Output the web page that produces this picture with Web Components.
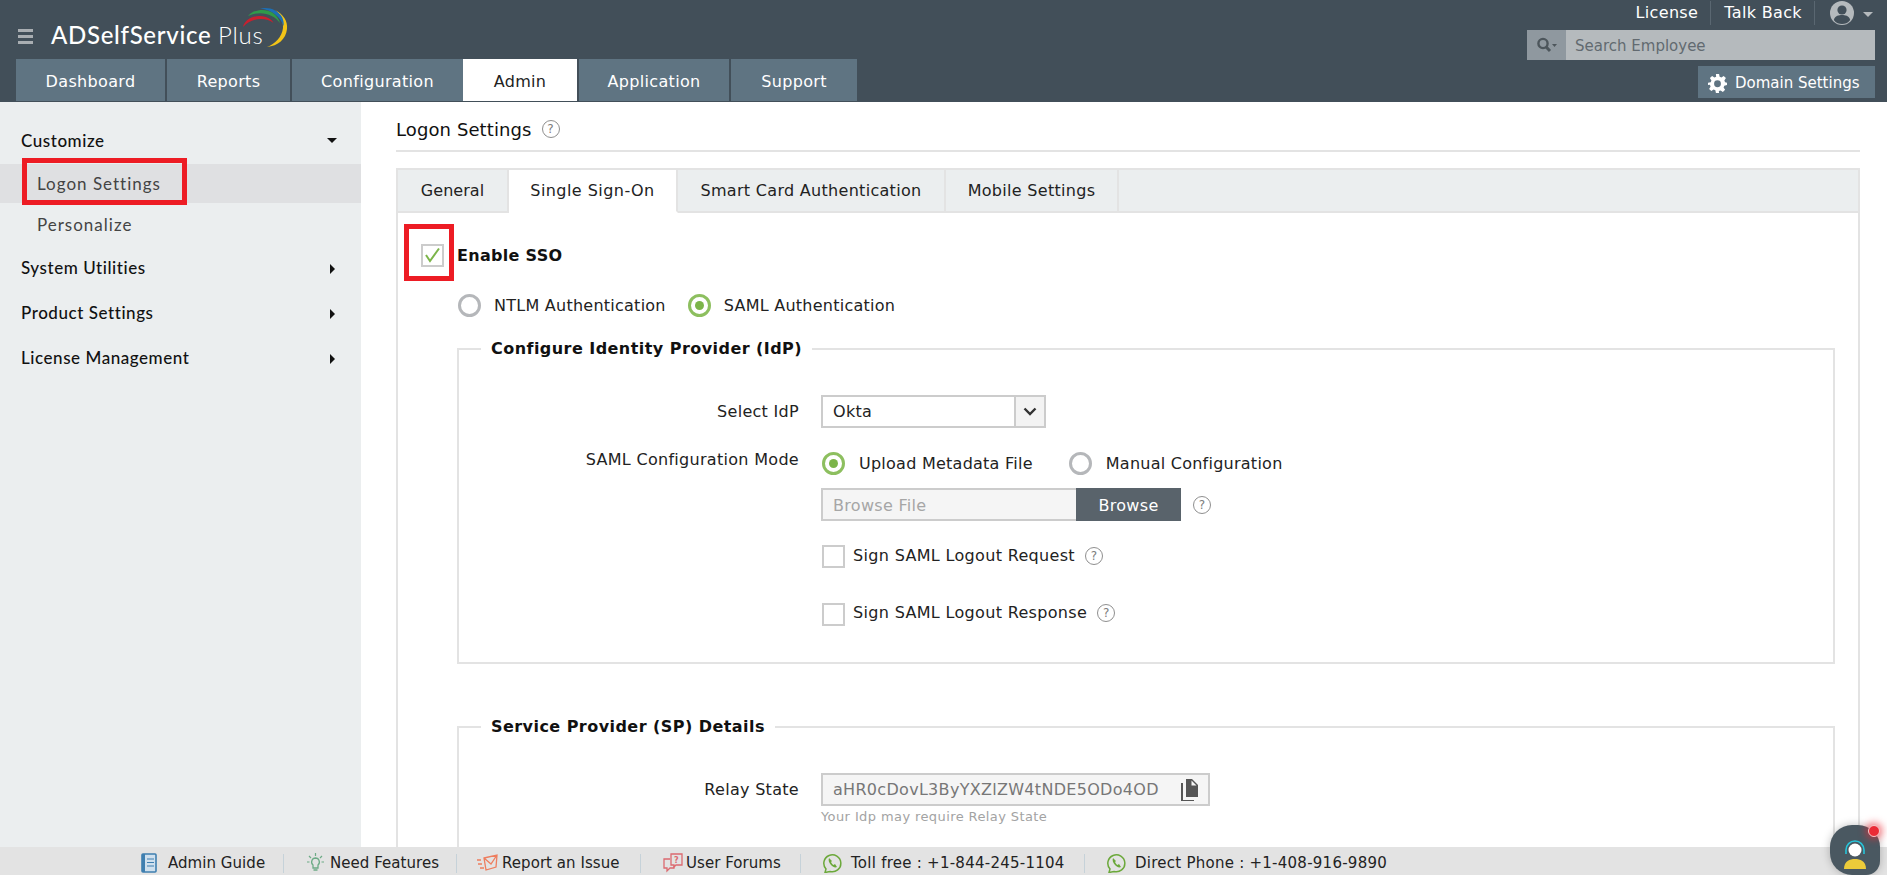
<!DOCTYPE html>
<html>
<head>
<meta charset="utf-8">
<title>ADSelfService Plus</title>
<style>
  html, body { margin: 0; height: 100%; overflow: hidden; }
  body { font-family: "DejaVu Sans", sans-serif; font-size: 16px; color: #222; }
  app-shell { height: 875px; }
</style>
</head>
<body>
<app-shell>
  <app-header slot="header"></app-header>
  <side-menu slot="side">
    <menu-group label="Customize" open>
      <menu-link active marked>Logon Settings</menu-link>
      <menu-link>Personalize</menu-link>
    </menu-group>
    <menu-group label="System Utilities"></menu-group>
    <menu-group label="Product Settings"></menu-group>
    <menu-group label="License Management"></menu-group>
  </side-menu>
  <logon-page slot="main"></logon-page>
  <app-footer slot="footer"></app-footer>
  <chat-bubble slot="footer"></chat-bubble>
</app-shell>

<script>
// small helper so each element is just a class with a template string
function comp(name, html, extra) {
  const t = document.createElement('template');
  t.innerHTML = html;
  customElements.define(name, class extends HTMLElement {
    constructor() {
      super();
      this.attachShadow({mode: 'open'}).appendChild(t.content.cloneNode(true));
      if (extra) extra(this, this.shadowRoot);
    }
  });
}

comp('app-shell', `
<style>
  :host { display: flex; flex-direction: column; }
  .mid { flex: 1; display: flex; min-height: 0; }
</style>
<slot name="header"></slot>
<div class="mid"><slot name="side"></slot><slot name="main"></slot></div>
<slot name="footer"></slot>`);

comp('top-tab', `
<style>
  :host { display: flex; align-items: center; justify-content: center; height: 42px; padding-top: 2px; box-sizing: border-box; background: #5f7482; color: #fff; font-size: 16px; letter-spacing: .33px; }
  :host([active]) { background: #fff; color: #222; }
</style>
<slot></slot>`);

comp('app-header', `
<style>
  :host { display: flex; justify-content: space-between; height: 102px; background: #424f59; flex: none; }
  .left { display: flex; flex-direction: column; }
  .brand { height: 59px; display: flex; align-items: flex-start; position: relative; }
  .burger { width: 15px; height: 15px; margin: 29px 18px 0 18px; display: flex; flex-direction: column; justify-content: space-between; }
  .burger i { height: 3px; background: #a9aeb2; display: block; }
  .logo { font: 500 24px Lato, sans-serif; color: #fff; margin-top: 21px; line-height: 28px; letter-spacing: .7px; white-space: nowrap; }
  .logo span { font-weight: 300; }
  .arcs { width: 48px; height: 42px; margin: 7px 0 0 -21px; }
  .tabs { display: flex; gap: 2px; padding-left: 16px; }
  .right { display: flex; flex-direction: column; align-items: flex-end; padding-right: 12px; }
  .links { height: 30px; display: flex; align-items: center; color: #fff; font-size: 16px; letter-spacing: .35px; margin-top: -2px; }
  .links span { padding: 0 12px 0 13px; line-height: 24px; border-right: 1px solid #5a6771; }
  .links svg { margin-left: 15px; }
  .search { width: 348px; height: 30px; display: flex; margin-top: 2px; background: #b5babd; }
  .search .ic { width: 39px; background: #8f989f; display: flex; align-items: center; justify-content: center; }
  .search .ph { padding: 1px 0 0 9px; line-height: 30px; color: #626a70; font-size: 15px; }
  .domain { width: 177px; height: 32px; margin-top: 6px; background: #5f7482; color: #fff; display: flex; align-items: center; font-size: 15px; box-sizing: border-box; padding: 2px 0 0 10px; gap: 8px; }
</style>
<div class="left">
  <div class="brand">
    <div class="burger"><i></i><i></i><i></i></div>
    <div class="logo">ADSelfService <span>Plus</span></div>
    <svg class="arcs" viewBox="0 0 48 42">
      <path d="M33 3 C41 7 46 14 45 22 C44 32 36 39 25 40 C33 37 40 30 41 21 C41.500 13 38 7 33 3Z" fill="#f2c417"/>
      <path d="M18 1.500 C27 -.5 36 3 40 10 C41.500 13 42 16 41.500 19 C39 10 30 3 18 1.500Z" fill="#1c6fb6"/>
      <path d="M6 9 C12 2 24 1 31 6 C35 9 37 12 38 16 C32 7 18 3 6 9Z" fill="#2f9a4a"/>
      <path d="M1 20 C3 11 15 7 24 10 C28 11.500 30 13 31.500 16 C24 10 10 10 1 20Z" fill="#c8202f"/>
    </svg>
  </div>
  <div class="tabs">
    <top-tab style="width:149px">Dashboard</top-tab>
    <top-tab style="width:123px">Reports</top-tab>
    <top-tab style="width:171px;margin-right:-2px">Configuration</top-tab>
    <top-tab active style="width:114px">Admin</top-tab>
    <top-tab style="width:150px">Application</top-tab>
    <top-tab style="width:126px">Support</top-tab>
  </div>
</div>
<div class="right">
  <div class="links">
    <span>License</span><span>Talk Back</span>
    <svg width="45" height="26" viewBox="0 0 45 26">
      <circle cx="12" cy="13" r="12" fill="#b5babd"/>
      <circle cx="12" cy="10" r="4.600" fill="#424f59"/>
      <path d="M3.800 20 C5 15.500 9 15 12 15 C15 15 19 15.500 20.200 20 C18 23 15 24 12 24 C9 24 6 23 3.800 20Z" fill="#424f59"/>
      <path d="M33 12 H43 L38 17Z" fill="#b5babd"/>
    </svg>
  </div>
  <div class="search">
    <div class="ic"><svg width="22" height="16" viewBox="0 0 22 16">
      <circle cx="7" cy="6.500" r="4.600" fill="none" stroke="#4d565c" stroke-width="2.400"/>
      <path d="M10.200 10 L14 14" stroke="#4d565c" stroke-width="3"/>
      <path d="M16 7 H21 L18.500 10Z" fill="#4d565c"/></svg></div>
    <div class="ph">Search Employee</div>
  </div>
  <div class="domain">
    <svg width="19" height="19" viewBox="0 0 24 24"><path fill="#fff" fill-rule="evenodd" d="M10 0h4l.7 3.400 2.200.9L19.800 2.400l2.800 2.800-1.900 2.900.9 2.200L24 11v3l-3.400.7-.9 2.200 1.900 2.900-2.800 2.800-2.900-1.900-2.200.9L14 24h-4l-.7-3.400-2.200-.9-2.900 1.900-2.800-2.800 1.900-2.900-.9-2.200L0 14v-3l3.400-.7.9-2.200-1.900-2.900 2.800-2.800 2.900 1.900 2.200-.9zM12 8a4.300 4.300 0 1 0 0 8.600A4.300 4.300 0 0 0 12 8z"/></svg>
    Domain Settings
  </div>
</div>`);

comp('side-menu', `
<style>
  :host { display: block; width: 361px; flex: none; background: #ebeeef; padding-top: 20px; box-sizing: border-box; }
</style>
<slot></slot>`);

comp('menu-group', `
<style>
  :host { display: block; font: 500 17px Lato, sans-serif; letter-spacing: .55px; color: #111; }
  .head { display: flex; align-items: center; justify-content: space-between; height: 36px; padding: 0 24px 2px 21px; box-sizing: border-box; margin-bottom: 9px; }
  :host([open]) .head { margin-bottom: 6px; padding-bottom: 0; }
  .caret { width: 0; height: 0; border-left: 5px solid #111; border-top: 5px solid transparent; border-bottom: 5px solid transparent; margin-right: 2px; position: relative; top: 2px; }
  :host([open]) .caret { border-top: 5.500px solid #111; border-left: 5px solid transparent; border-right: 5px solid transparent; border-bottom: 0; margin: 0; top: 0; }
  .kids { margin-bottom: 6px; display: none; }
  :host([open]) .kids { display: block; }
</style>
<div class="head"><span class="t"></span><span class="caret"></span></div>
<div class="kids"><slot></slot></div>`, (el, sr) => {
  sr.querySelector('.t').textContent = el.getAttribute('label');
});

comp('menu-link', `
<style>
  :host { display: block; height: 39px; line-height: 39px; padding-left: 37px; color: #444; font-weight: 400; position: relative; margin-bottom: 2px; letter-spacing: 1px; }
  :host([active]) { background: #dfe0e2; }
  .mark { display: none; position: absolute; left: 22px; top: -6px; width: 165px; height: 47px; border: 5px solid #ed1c24; box-sizing: border-box; }
  :host([marked]) .mark { display: block; }
</style>
<slot></slot><div class="mark"></div>`);

comp('help-ic', `
<style>
  :host { display: inline-flex; width: 18px; height: 18px; box-sizing: border-box; border: 1.500px solid #8f8f8f; border-radius: 50%; align-items: center; justify-content: center; font: 12px "DejaVu Sans", sans-serif; color: #7c7c7c; flex: none; letter-spacing: 0; }
</style>?`);

comp('radio-opt', `
<style>
  :host { display: inline-flex; align-items: center; gap: var(--r-gap, 13px); font-size: 16px; letter-spacing: .25px; color: #222; }
  .c { width: 23px; height: 23px; box-sizing: border-box; border: 3px solid #b5b7ba; border-radius: 50%; display: flex; align-items: center; justify-content: center; background: #fff; flex: none; }
  .c i { width: 9px; height: 9px; border-radius: 50%; display: none; background: #7cb54a; }
  :host([on]) .c { border-color: #8dbf5f; }
  :host([on]) .c i { display: block; }
</style>
<span class="c"><i></i></span><slot></slot>`);

comp('check-opt', `
<style>
  :host { display: flex; align-items: center; gap: 8px; font-size: 16px; letter-spacing: .33px; color: #222; }
  .b { width: 23px; height: 23px; box-sizing: border-box; border: 2px solid #ccc; background: #fff; flex: none; position: relative; }
  .mark { display: none; position: absolute; left: -19px; top: -22px; width: 50px; height: 57px; border: 5px solid #ed1c24; box-sizing: border-box; }
  :host([marked]) .mark { display: block; }
  svg { display: none; position: absolute; left: 1px; top: 1px; }
  :host([on]) svg { display: block; }
  .t { display: flex; align-items: center; gap: 8px; padding-bottom: var(--t-pb, 4px); }
</style>
<span class="b"><svg width="17" height="16" viewBox="0 0 17 16"><path d="M2 8 L6 14 L15 1.500" fill="none" stroke="#7cb54a" stroke-width="2"/></svg><span class="mark"></span></span>
<div class="t"><slot></slot></div>`);

comp('form-row', `
<style>
  :host { display: grid; grid-template-columns: 340px 1fr; column-gap: 22px; font-size: 16px; letter-spacing: .3px; color: #222; }
  .l { text-align: right; line-height: var(--label-lh, 33px); }
</style>
<div class="l"></div><div class="c"><slot></slot></div>`, (el, sr) => {
  sr.querySelector('.l').textContent = el.getAttribute('label');
});

comp('group-box', `
<style>
  :host { display: block; }
  fieldset { border: 2px solid #e3e3e3; margin: 0; padding: 0; height: 100%; box-sizing: border-box; }
  legend { margin-left: 22px; padding: 0 10px; font-weight: 700; font-size: 16px; line-height: 20px; letter-spacing: .45px; color: #111; }
</style>
<fieldset><legend></legend><slot></slot></fieldset>`, (el, sr) => {
  sr.querySelector('legend').textContent = el.getAttribute('title');
});

comp('inner-tab', `
<style>
  :host { display: flex; align-items: center; justify-content: center; height: 41px; background: #ebeeef; border-right: 2px solid #e3e3e3; border-bottom: 2px solid #e3e3e3; font-size: 16px; letter-spacing: .3px; color: #222; box-sizing: content-box; }
  :host([active]) { background: #fff; border-bottom-color: #fff; }
</style>
<slot></slot>`);

comp('logon-page', `
<style>
  :host { display: block; flex: 1; min-width: 0; overflow: hidden; padding: 0 27px 0 35px; background: #fff; }
  h1 { margin: 0; border-bottom: 2px solid #e3e3e3; font-weight: 400; font-size: 18px; letter-spacing: .1px; color: #111; display: flex; align-items: center; gap: 10px; padding-top: 6px; box-sizing: border-box; height: 50px; }
  .box { margin-top: 16px; border: 2px solid #e3e3e3; border-bottom: 0; height: 700px; }
  .strip { display: flex; background: #ebeeef; height: 43px; box-shadow: inset 0 -2px 0 #e3e3e3; }
  .panel { padding: 31px 23px 0 23px; }
  .en { --t-pb: 0px; }
  .enable { font-weight: 700; color: #111; margin-left: 5px; letter-spacing: .3px; }
  .auth { display: flex; gap: 22px; margin: 27px 0 0 37px; height: 23px; }
  .gb1 { margin: 22px 0 0 36px; height: 325px; }
  .gb2 { margin-top: 53px; margin-left: 36px; height: 300px; }
  .r1 { padding-top: 36px; }
  .select { width: 225px; height: 33px; border: 2px solid #ccc; box-sizing: border-box; display: flex; align-items: center; }
  .select .v { flex: 1; padding-left: 10px; }
  .select .a { width: 30px; height: 100%; background: #f3f3f3; border-left: 2px solid #ccc; box-sizing: border-box; display: flex; align-items: center; justify-content: center; }
  .r2 { margin-top: 23px; --label-lh: 18px; }
  .modes { display: flex; gap: 36px; margin: 1px 0 0 1px; --r-gap: 14px; }
  .file { display: flex; align-items: center; margin-top: 13px; }
  .file .in { width: 255px; height: 33px; box-sizing: border-box; background: #f5f5f5; border: 2px solid #ccc; border-right: 0; padding-left: 10px; line-height: 31px; color: #a6a6a6; }
  .file .btn { width: 105px; height: 33px; line-height: 35px; text-align: center; background: #59636b; color: #fff; }
  .file help-ic { margin-left: 12px; }
  check-opt help-ic { margin-left: 2px; }
  .ck1 { margin: 24px 0 0 1px; --t-pb: 2px; }
  .ck2 { margin: 35px 0 0 1px; }
  .r3 { padding-top: 36px; }
  .relay { width: 389px; height: 33px; box-sizing: border-box; background: #f5f5f5; border: 2px solid #ccc; display: flex; align-items: center; justify-content: space-between; padding: 0 10px; color: #777; }
  .hint { font-size: 13px; color: #a3a3a3; margin-top: 3px; letter-spacing: .4px; }
</style>
<h1>Logon Settings <help-ic></help-ic></h1>
<div class="box">
  <div class="strip">
    <inner-tab style="width:109px;letter-spacing:.05px">General</inner-tab>
    <inner-tab active style="width:167px;letter-spacing:.45px">Single Sign-On</inner-tab>
    <inner-tab style="width:266px">Smart Card Authentication</inner-tab>
    <inner-tab style="width:171px">Mobile Settings</inner-tab>
  </div>
  <div class="panel">
    <check-opt class="en" on marked><span class="enable">Enable SSO</span></check-opt>
    <div class="auth">
      <radio-opt>NTLM Authentication</radio-opt>
      <radio-opt on>SAML Authentication</radio-opt>
    </div>
    <group-box class="gb1" title="Configure Identity Provider (IdP)">
      <form-row class="r1" label="Select IdP">
        <div class="select"><span class="v">Okta</span><span class="a"><svg width="14" height="9" viewBox="0 0 14 9"><path d="M1.500 1.500 L7 7 L12.500 1.500" fill="none" stroke="#333" stroke-width="2.400"/></svg></span></div>
      </form-row>
      <form-row class="r2" label="SAML Configuration Mode">
        <div class="modes"><radio-opt on>Upload Metadata File</radio-opt><radio-opt>Manual Configuration</radio-opt></div>
        <div class="file"><div class="in">Browse File</div><div class="btn">Browse</div><help-ic></help-ic></div>
        <check-opt class="ck1">Sign SAML Logout Request <help-ic></help-ic></check-opt>
        <check-opt class="ck2">Sign SAML Logout Response <help-ic></help-ic></check-opt>
      </form-row>
    </group-box>
    <group-box class="gb2" title="Service Provider (SP) Details">
      <form-row class="r3" label="Relay State">
        <div class="relay"><span>aHR0cDovL3ByYXZlZW4tNDE5ODo4OD</span>
          <svg width="18" height="22" viewBox="0 0 18 22"><path fill="#555" d="M6 0h6l6 6v12H6z"/><path fill="#555" d="M3 4v17h11v1H1V4z"/><path fill="#f5f5f5" d="M11.500 1.500v5h5z"/></svg>
        </div>
        <div class="hint">Your Idp may require Relay State</div>
      </form-row>
    </group-box>
  </div>
</div>`);

comp('foot-item', `
<style>
  :host { display: flex; align-items: center; height: 24px; font-size: 15px; letter-spacing: .05px; color: #222; white-space: nowrap; }
</style>
<slot name="icon"></slot><slot></slot>`);

comp('app-footer', `
<style>
  :host { display: flex; align-items: center; height: 28px; flex: none; background: #e3e3e3; padding: 4px 0 0 141px; box-sizing: border-box; }
  i { width: 1px; height: 19px; background: #c6d2d9; flex: none; }
  svg { flex: none; }
</style>
<foot-item style="width:142px"><svg slot="icon" width="16" height="20" viewBox="0 0 16 20" style="margin-right:11px"><rect x="1" y="1" width="14" height="18" rx="1" fill="#cfe0ee" stroke="#3f7fb0" stroke-width="1.600"/><path d="M1 1h3v18H1z" fill="#3f7fb0"/><path d="M6 6h7M6 9.500h7M6 13h7" stroke="#3f7fb0"/></svg>Admin Guide</foot-item><i></i>
<foot-item style="width:172px;padding-left:23px;box-sizing:border-box"><svg slot="icon" width="17" height="20" viewBox="0 0 17 20" style="margin-right:6px"><path d="M8.500 5a4 4 0 0 0-2.500 7v3h5v-3a4 4 0 0 0-2.500-7zM6.500 17h4" fill="none" stroke="#6dab86" stroke-width="1.300"/><path d="M8.500 0v3M2 3l2 2M15 3l-2 2M0 9h2.500M17 9h-2.500" stroke="#6dab86" stroke-width="1.200"/></svg>Need Features</foot-item><i></i>
<foot-item style="width:183px;padding-left:20px;box-sizing:border-box"><svg slot="icon" width="21" height="18" viewBox="0 0 21 18" style="margin-right:4px"><path d="M7 4l13-3-1 12-10 3zM7 4l7 6 6-9M0 6h4M1 10h4M3 14h4" fill="none" stroke="#ee7d5e" stroke-width="1.300"/></svg>Report an Issue</foot-item><i></i>
<foot-item style="width:159px;padding-left:22px;box-sizing:border-box"><svg slot="icon" width="20" height="20" viewBox="0 0 20 20" style="margin-right:3px"><path d="M8 1h11v11H13l-2 2v-2H8z" fill="none" stroke="#dc6a70" stroke-width="1.300"/><path d="M7 6H1v9h3v3l3-3h4v-2" fill="none" stroke="#dc6a70" stroke-width="1.300"/><text x="11" y="10" font-size="8" font-family="DejaVu Sans" font-weight="700" fill="#dc6a70">?</text></svg>User Forums</foot-item><i></i>
<foot-item style="width:283px;padding-left:22px;box-sizing:border-box;letter-spacing:.25px"><svg slot="icon" width="19" height="20" viewBox="0 0 19 20" style="margin-right:9px"><path d="M3 16 A8.500 8.500 0 1 1 7 18.500 L2 19.500z" fill="none" stroke="#6ba83a" stroke-width="1.500"/><path d="M6 5c-1 2 0 5 2 7s4 3 6 2l-2-3-1.500 1c-1-.5-2-2-2.500-3L9 8z" fill="#6ba83a"/></svg>Toll free : +1-844-245-1104</foot-item><i></i>
<foot-item style="padding-left:22px;letter-spacing:.25px"><svg slot="icon" width="19" height="20" viewBox="0 0 19 20" style="margin-right:9px"><path d="M3 16 A8.500 8.500 0 1 1 7 18.500 L2 19.500z" fill="none" stroke="#6ba83a" stroke-width="1.500"/><path d="M6 5c-1 2 0 5 2 7s4 3 6 2l-2-3-1.500 1c-1-.5-2-2-2.500-3L9 8z" fill="#6ba83a"/></svg>Direct Phone : +1-408-916-9890</foot-item>`);

comp('chat-bubble', `
<style>
  :host { position: fixed; left: 1830px; top: 825px; width: 50px; height: 50px; background: #4a5861; border-radius: 22px 22px 14px 22px; box-shadow: 0 0 8px rgba(0,0,0,.25); }
  .dot { position: absolute; left: 38px; top: 0; width: 12px; height: 12px; border-radius: 50%; background: #ea2b36; border: 1.500px solid #f6c9cb; box-sizing: border-box; box-shadow: 0 0 7px 3px rgba(234,43,54,.55); }
  svg { position: absolute; left: 13px; top: 14px; }
</style>
<svg width="24" height="30" viewBox="0 0 24 30">
  <path d="M3 15 V11 a9 9 0 0 1 18 0 V15" fill="none" stroke="#27c4d9" stroke-width="1.600"/>
  <circle cx="12" cy="11" r="6.500" fill="#fff"/>
  <path d="M1 30 C1 22 7 20 12 20 C17 20 23 22 23 30Z" fill="#eccb3a"/>
</svg>
<div class="dot"></div>`);
</script>
</body>
</html>
